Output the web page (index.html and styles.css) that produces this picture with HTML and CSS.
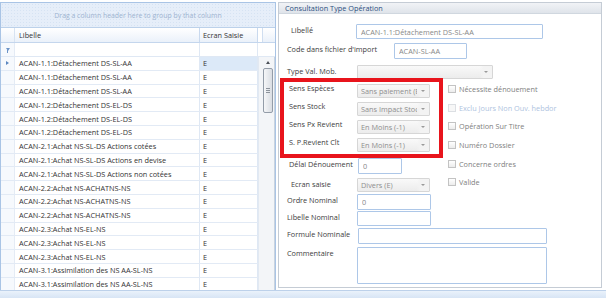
FILE: index.html
```html
<!DOCTYPE html>
<html lang="fr">
  <head>
    <meta charset="UTF-8" />
    <title>Consultation Type Opération</title>
    <link rel="stylesheet" href="styles.css">
  </head>
  <body>
    <div class="window">
      <div class="workspace">
        <!-- grid of operation types -->
        <section class="grid">
          <div class="grid__groupby">Drag a column header here to group by that column</div>
          <div class="grid__head">
            <span class="cell cell--ind"></span>
            <span class="cell cell--lib">Libelle</span>
            <span class="cell cell--ecran">Ecran Saisie</span>
            <span class="cell cell--pad"></span>
          </div>
          <div class="grid__filter">
            <span class="cell cell--ind"><span class="funnel"></span></span>
            <span class="cell cell--lib"></span>
            <span class="cell cell--ecran"></span>
            <span class="cell cell--pad"></span>
          </div>
          <div class="grid__body">
            <div class="grid__rows">
              <div class="row row--current"><span class="cell cell--ind"><span class="pointer"></span></span><span class="cell cell--lib">ACAN-1.1:Détachement DS-SL-AA</span><span class="cell cell--ecran">E</span></div>
              <div class="row"><span class="cell cell--ind"></span><span class="cell cell--lib">ACAN-1.1:Détachement DS-SL-AA</span><span class="cell cell--ecran">E</span></div>
              <div class="row"><span class="cell cell--ind"></span><span class="cell cell--lib">ACAN-1.1:Détachement DS-SL-AA</span><span class="cell cell--ecran">E</span></div>
              <div class="row"><span class="cell cell--ind"></span><span class="cell cell--lib">ACAN-1.2:Détachement DS-EL-DS</span><span class="cell cell--ecran">E</span></div>
              <div class="row"><span class="cell cell--ind"></span><span class="cell cell--lib">ACAN-1.2:Détachement DS-EL-DS</span><span class="cell cell--ecran">E</span></div>
              <div class="row"><span class="cell cell--ind"></span><span class="cell cell--lib">ACAN-1.2:Détachement DS-EL-DS</span><span class="cell cell--ecran">E</span></div>
              <div class="row"><span class="cell cell--ind"></span><span class="cell cell--lib">ACAN-2.1:Achat NS-SL-DS Actions cotées</span><span class="cell cell--ecran">E</span></div>
              <div class="row"><span class="cell cell--ind"></span><span class="cell cell--lib">ACAN-2.1:Achat NS-SL-DS Actions en devise</span><span class="cell cell--ecran">E</span></div>
              <div class="row"><span class="cell cell--ind"></span><span class="cell cell--lib">ACAN-2.1:Achat NS-SL-DS Actions non cotées</span><span class="cell cell--ecran">E</span></div>
              <div class="row"><span class="cell cell--ind"></span><span class="cell cell--lib">ACAN-2.2:Achat NS-ACHATNS-NS</span><span class="cell cell--ecran">E</span></div>
              <div class="row"><span class="cell cell--ind"></span><span class="cell cell--lib">ACAN-2.2:Achat NS-ACHATNS-NS</span><span class="cell cell--ecran">E</span></div>
              <div class="row"><span class="cell cell--ind"></span><span class="cell cell--lib">ACAN-2.2:Achat NS-ACHATNS-NS</span><span class="cell cell--ecran">E</span></div>
              <div class="row"><span class="cell cell--ind"></span><span class="cell cell--lib">ACAN-2.3:Achat NS-EL-NS</span><span class="cell cell--ecran">E</span></div>
              <div class="row"><span class="cell cell--ind"></span><span class="cell cell--lib">ACAN-2.3:Achat NS-EL-NS</span><span class="cell cell--ecran">E</span></div>
              <div class="row"><span class="cell cell--ind"></span><span class="cell cell--lib">ACAN-2.3:Achat NS-EL-NS</span><span class="cell cell--ecran">E</span></div>
              <div class="row"><span class="cell cell--ind"></span><span class="cell cell--lib">ACAN-3.1:Assimilation des NS AA-SL-NS</span><span class="cell cell--ecran">E</span></div>
              <div class="row"><span class="cell cell--ind"></span><span class="cell cell--lib">ACAN-3.1:Assimilation des NS AA-SL-NS</span><span class="cell cell--ecran">E</span></div>
            </div>
            <div class="scrollbar">
              <span class="scrollbar__up"></span>
              <span class="scrollbar__thumb"><i></i><i></i><i></i></span>
            </div>
          </div>
        </section>

        <!-- detail panel -->
        <section class="panel">
          <div class="panel__title">Consultation Type Opération</div>
          <form class="form">
            <div class="field field--first">
              <label class="field__label field__label--in">Libellé</label>
              <input class="input input--libelle" value="ACAN-1.1:Détachement DS-SL-AA" readonly>
            </div>
            <div class="field field--code">
              <label class="field__label field__label--code">Code dans fichier d'import</label>
              <input class="input input--code" value="ACAN-SL-AA" readonly>
            </div>
            <div class="field field--type">
              <label class="field__label">Type Val. Mob.</label>
              <div class="combo combo--type"><span class="combo__text"></span><span class="combo__arrow"></span></div>
            </div>

            <div class="split">
              <div class="split__left">
                <div class="highlight">
                  <div class="hl-row">
                    <label class="hl-row__label">Sens Espèces</label>
                    <div class="combo"><span class="combo__text">Sans paiement (E)</span><span class="combo__arrow"></span></div>
                  </div>
                  <div class="hl-row">
                    <label class="hl-row__label">Sens Stock</label>
                    <div class="combo"><span class="combo__text">Sans Impact Stock</span><span class="combo__arrow"></span></div>
                  </div>
                  <div class="hl-row">
                    <label class="hl-row__label">Sens Px Revient</label>
                    <div class="combo"><span class="combo__text">En Moins (-1)</span><span class="combo__arrow"></span></div>
                  </div>
                  <div class="hl-row">
                    <label class="hl-row__label">S. P.Revient Clt</label>
                    <div class="combo"><span class="combo__text">En Moins (-1)</span><span class="combo__arrow"></span></div>
                  </div>
                </div>
                <div class="field field--delai">
                  <label class="field__label field__label--delai">Délai Dénouement</label>
                  <input class="input input--delai" value="0" readonly>
                </div>
                <div class="field field--ecran">
                  <label class="field__label field__label--in">Ecran saisie</label>
                  <div class="combo"><span class="combo__text">Divers (E)</span><span class="combo__arrow"></span></div>
                </div>
              </div>

              <div class="split__right">
                <div class="check"><span class="check__box"></span>Nécessite dénouement</div>
                <div class="check check--disabled"><span class="check__box"></span>Exclu Jours Non Ouv. hebdor</div>
                <div class="check"><span class="check__box"></span>Opération Sur Titre</div>
                <div class="check"><span class="check__box"></span>Numéro Dossier</div>
                <div class="check"><span class="check__box"></span>Concerne ordres</div>
                <div class="check"><span class="check__box"></span>Valide</div>
              </div>
            </div>

            <div class="field field--ordre">
              <label class="field__label">Ordre Nominal</label>
              <input class="input input--short" value="0" readonly>
            </div>
            <div class="field field--libnom">
              <label class="field__label">Libelle Nominal</label>
              <input class="input input--short input--thin" value="" readonly>
            </div>
            <div class="field field--formule">
              <label class="field__label">Formule Nominale</label>
              <input class="input input--long" value="" readonly>
            </div>
            <div class="field field--comment">
              <label class="field__label">Commentaire</label>
              <textarea class="input input--area" readonly></textarea>
            </div>
          </form>
        </section>
      </div>
      <div class="statusbar"></div>
    </div>
  </body>
</html>
```

FILE: styles.css
```css
* {
  margin: 0;
  padding: 0;
  box-sizing: border-box;
}

body {
  font-family: "Open Sans", "Noto Sans", sans-serif;
  font-size: 7.3px;
  color: #333;
  background-color: #fff;
  width: 606px;
  height: 298px;
  overflow: hidden;
}

.window {
  display: flex;
  flex-direction: column;
  height: 298px;
}

.workspace {
  display: flex;
  height: 290px;
  padding-top: 2px;
}

.statusbar {
  height: 8px;
  border-top: 1px solid #bdd1ea;
  background: linear-gradient(#eaf2fb, #d8e5f5);
}

/* ---------- grid ---------- */

.grid {
  width: 276px;
  display: flex;
  flex-direction: column;
  border: 1px solid #a9c4e5;
  border-bottom: none;
}

.grid__groupby {
  height: 25px;
  display: flex;
  align-items: center;
  justify-content: center;
  font-size: 6.9px;
  color: #9db3d0;
  background-color: #e6eef9;
  background-image: radial-gradient(#d6e3f3 0.6px, transparent 0.7px);
  background-size: 3px 3px;
  border-bottom: 1px solid #bcd1ea;
}

.grid__head,
.grid__filter,
.row {
  display: flex;
}

.grid__head {
  height: 15px;
  background: linear-gradient(#ffffff, #eaf1fa);
  border-bottom: 1px solid #c4d6ed;
}

.grid__filter {
  height: 14px;
  border-bottom: 1px solid #dfe8f4;
}

.cell {
  display: flex;
  align-items: center;
  white-space: nowrap;
  overflow: hidden;
}

.cell--ind {
  width: 14px;
  justify-content: center;
  border-right: 1px solid #e4ebf5;
  background-color: #f6f9fd;
}

.cell--lib {
  width: 185px;
  padding-left: 4px;
  border-right: 1px solid #dfe8f4;
}

.cell--ecran {
  width: 58px;
  padding-left: 3px;
  border-right: 1px solid #dfe8f4;
}

.cell--pad {
  width: 17px;
}

.grid__head .cell--ind {
  background: none;
  border-right-color: #d7e3f2;
}

.grid__head .cell--lib,
.grid__head .cell--ecran {
  border-right-color: #c9d9ee;
}

.grid__head .cell--pad {
  border-left: 4px solid #fff;
  box-shadow: inset 1px 0 0 #d0def0;
}

.funnel {
  width: 0;
  height: 0;
  border-left: 2px solid transparent;
  border-right: 2px solid transparent;
  border-top: 3px solid #6b93c7;
  position: relative;
}

.funnel::after {
  content: "";
  position: absolute;
  left: -0.5px;
  top: -1px;
  width: 1px;
  height: 3px;
  background-color: #6b93c7;
}

.pointer {
  width: 0;
  height: 0;
  border-top: 2px solid transparent;
  border-bottom: 2px solid transparent;
  border-left: 3px solid #5a86c0;
}

.grid__body {
  flex: 1;
  display: flex;
  overflow: hidden;
}

.grid__rows {
  width: 257px;
}

.row {
  height: 13.8px;
  border-bottom: 1px solid #e2eaf5;
}

.row--current .cell--ecran {
  background-color: #dce9f8;
}

.scrollbar {
  width: 17px;
  position: relative;
  border-left: 1px solid #e2e9f2;
  border-right: 1px solid #c9d3df;
  background-color: #f3f5f8;
  display: flex;
  flex-direction: column;
  align-items: center;
  padding-left: 2px;
}

.scrollbar__up {
  margin-top: 4px;
  width: 0;
  height: 0;
  border-left: 2.5px solid transparent;
  border-right: 2.5px solid transparent;
  border-bottom: 3px solid #4a4f57;
}

.scrollbar__thumb {
  margin-top: 4px;
  width: 10px;
  height: 45px;
  border: 1px solid #939ca8;
  border-radius: 2px;
  background: linear-gradient(90deg, #f5f6f8, #d9dde3);
  display: flex;
  flex-direction: column;
  align-items: center;
  justify-content: center;
  gap: 1px;
}

.scrollbar__thumb i {
  display: block;
  width: 4px;
  height: 1px;
  background-color: #8c939c;
}

/* ---------- detail panel ---------- */

.panel {
  margin-left: 2px;
  width: 324px;
  height: 286px;
  border: 1px solid #c5ccd5;
}

.panel__title {
  height: 11px;
  padding-left: 6px;
  display: flex;
  align-items: center;
  color: #2d4f7f;
  background: linear-gradient(#f1f3f6, #dfe4ea);
  border-bottom: 1px solid #d0d7df;
}

.form {
  padding: 10px 0 0 8px;
  display: flex;
  flex-direction: column;
}

.field {
  display: flex;
  align-items: flex-start;
}

.field__label {
  width: 70px;
  line-height: 12px;
  color: #3d3d3d;
  white-space: nowrap;
}

.field__label--in {
  padding-left: 4px;
}

.field__label--code {
  width: 107px;
}

.field__label--delai {
  padding-left: 2px;
  width: 71px;
}

.field--code {
  margin-top: 4px;
}

.field--type {
  margin-top: 6px;
}

.field--delai {
  padding-left: 7px;
}

.field--ecran {
  margin-top: 4px;
  padding-left: 7px;
}

.field--ordre {
  margin-top: 2px;
}

.field--libnom {
  margin-top: 1px;
}

.field--formule {
  margin-top: 2px;
}

.field--comment {
  margin-top: 3px;
}

.input {
  font: inherit;
  color: #888;
  height: 16px;
  padding: 0 4px;
  border: 1px solid #adc7e8;
  border-radius: 1px;
  background-color: #fff;
  outline: none;
}

.input--libelle {
  margin-left: -1px;
  width: 187px;
  height: 15px;
}

.input--code {
  width: 73px;
}

.input--delai {
  width: 44px;
}

.input--short {
  width: 74px;
}

.input--thin {
  height: 15px;
}

.input--long {
  margin-left: 1px;
  width: 189px;
}

.input--area {
  width: 190px;
  height: 37px;
  resize: none;
}

.combo {
  width: 73px;
  height: 14px;
  display: flex;
  align-items: center;
  padding-left: 3px;
  border: 1px solid #d6d6d6;
  border-radius: 1px;
  background: linear-gradient(#f9f9f9, #ececec);
  color: #8e8e8e;
  overflow: hidden;
}

.combo__text {
  flex: 1;
  white-space: nowrap;
  overflow: hidden;
}

.combo__arrow {
  flex: none;
  width: 12px;
  height: 100%;
  display: flex;
  align-items: center;
  justify-content: center;
  background: linear-gradient(90deg, rgba(249, 249, 249, 0), #f3f3f3 30%);
}

.combo__arrow::after {
  content: "";
  border-left: 2px solid transparent;
  border-right: 2px solid transparent;
  border-top: 2px solid #9a9a9a;
}

.combo--type {
  width: 136px;
}

/* red group round the four "sens" selects */
.split {
  display: flex;
  margin-top: -1px;
}

.split__left {
  margin-left: -7px;
  width: 163px;
}

.highlight {
  border: 4px solid #e8141c;
  padding-left: 5px;
}

.hl-row {
  height: 18px;
  display: flex;
  align-items: flex-start;
}

.hl-row__label {
  width: 68px;
  line-height: 12px;
  color: #3d3d3d;
  white-space: nowrap;
}

.hl-row .combo {
  margin-top: 2px;
}

.split__right {
  margin-left: 5px;
  padding-top: 2px;
}

.check {
  height: 18.6px;
  display: flex;
  align-items: center;
  gap: 3px;
  color: #808080;
  white-space: nowrap;
}

.check__box {
  width: 8px;
  height: 8px;
  border: 1px solid #c3c3c3;
  background: linear-gradient(#ffffff, #ececec);
}

.check--disabled {
  color: #aec3e0;
}

.check--disabled .check__box {
  border-color: #dcdfe3;
  background: #f7f7f7;
}
```
